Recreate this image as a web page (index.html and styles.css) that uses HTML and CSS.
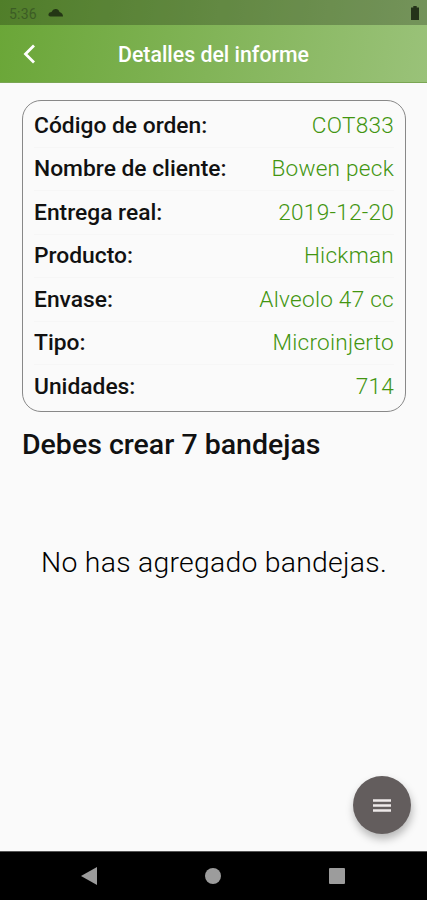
FILE: index.html
```html
<!DOCTYPE html>
<html lang="es">
<head>
  <meta charset="UTF-8">
  <meta name="viewport" content="width=device-width, initial-scale=1.0">
  <title>Detalles del informe</title>
  <link rel="stylesheet" href="styles.css">
</head>
<body>
  <div class="top">
    <div class="status-bar">
      <span class="time">5:36</span>
      <svg class="cloud" width="16" height="9" viewBox="0 0 16 9"><path d="M2.500 8.500Q0 8 .5 6Q1 4 3.500 4Q5 .5 8 1Q10.500 1 11.500 4Q15 5 15 8.500z"/></svg>
      <svg class="battery" width="8" height="14" viewBox="0 0 8 14"><path d="M2.300 0h3.400v1.500H8V14H0V1.500h2.300z"/></svg>
    </div>
    <div class="header">
      <button class="back-btn" aria-label="Volver">
        <svg width="14" height="20" viewBox="0 0 14 20"><path d="M12 1.500L3.500 10l8.500 8.500"/></svg>
      </button>
      <div class="title">Detalles del informe</div>
    </div>
  </div>

  <div class="content">
    <div class="card">
      <div class="row"><span class="label">Código de orden:</span><span class="value">COT833</span></div>
      <div class="row"><span class="label">Nombre de cliente:</span><span class="value">Bowen peck</span></div>
      <div class="row"><span class="label">Entrega real:</span><span class="value">2019-12-20</span></div>
      <div class="row"><span class="label">Producto:</span><span class="value">Hickman</span></div>
      <div class="row"><span class="label">Envase:</span><span class="value">Alveolo 47 cc</span></div>
      <div class="row"><span class="label">Tipo:</span><span class="value">Microinjerto</span></div>
      <div class="row"><span class="label">Unidades:</span><span class="value">714</span></div>
    </div>
    <div class="subtitle">Debes crear 7 bandejas</div>
    <div class="empty">No has agregado bandejas.</div>
    <button class="fab" aria-label="Menú">
      <svg width="18" height="13" viewBox="0 0 18 13"><path d="M0 1.500h18M0 6.500h18M0 11.500h18"/></svg>
    </button>
  </div>

  <!-- Android navigation -->
  <div class="nav-bar">
    <svg width="16" height="18" viewBox="0 0 16 18"><path d="M0 9L16 0v18z"/></svg>
    <svg width="16" height="16" viewBox="0 0 16 16"><circle cx="8" cy="8" r="8"/></svg>
    <svg width="16" height="16" viewBox="0 0 16 16"><rect width="16" height="16" rx="1"/></svg>
  </div>
</body>
</html>
```
FILE: styles.css
```css
* {
  box-sizing: border-box;
}

body {
  margin: 0;
  height: 900px;
  display: flex;
  flex-direction: column;
  overflow: hidden;
  font-family: Roboto, sans-serif;
  background: #fafafa;
  color: #111;
}

button {
  border: none;
  padding: 0;
  cursor: pointer;
}

.top {
  height: 83px;
  background: linear-gradient(100deg, #6aa637 0%, #9ac279 100%);
  border-bottom: 1px solid #7aa653;
  color: white;
}

.status-bar {
  height: 25px;
  display: flex;
  align-items: center;
  padding: 2px 8px 0 9px;
  background: rgba(0, 0, 0, 0.24);
}

.time {
  font-size: 14px;
  letter-spacing: 0.2px;
  color: #3c5c25;
}

.cloud {
  margin: -2px 0 0 11px;
  fill: #243615;
}

.battery {
  margin: -2px 0 0 auto;
  fill: #243219;
}

.header {
  height: 57px;
  display: grid;
  grid-template-columns: 60px 1fr 60px;
  align-items: center;
}

.back-btn {
  display: flex;
  margin-left: 22px;
  background: none;
}

.back-btn path {
  fill: none;
  stroke: white;
  stroke-width: 2.8;
}

.title {
  font-size: 21.3px;
  font-weight: 500;
  text-align: center;
  white-space: nowrap;
  padding-top: 2px;
}

.content {
  flex: 1;
  position: relative;
  padding: 17px 21px 0 22px;
}

.card {
  border: 1px solid #888;
  border-radius: 19px;
  padding: 3px 11px 2px;
}

.row {
  height: 43.5px;
  display: flex;
  align-items: center;
  justify-content: space-between;
  border-bottom: 1px solid #f6f6f6;
  font-size: 22.8px;
}

.row:last-child {
  border-bottom: none;
}

.label {
  font-weight: 500;
}

.value {
  font-size: 22.6px;
  font-weight: 300;
  letter-spacing: 0.25px;
  color: #429510;
}

.subtitle {
  margin-top: 15px;
  font-size: 28.5px;
  font-weight: 500;
  line-height: 36px;
}

.empty {
  margin-top: 82px;
  font-size: 28.4px;
  font-weight: 300;
  letter-spacing: 0.25px;
  line-height: 36px;
  text-align: center;
  white-space: nowrap;
  color: #000;
}

.fab {
  position: absolute;
  right: 16px;
  bottom: 17px;
  width: 58px;
  height: 58px;
  display: flex;
  align-items: center;
  justify-content: center;
  border-radius: 50%;
  background: #635d5d;
  box-shadow: 1px 5px 8px rgba(0, 0, 0, 0.28);
}

.fab path {
  stroke: #eee9e9;
  stroke-width: 2.5;
}

.nav-bar {
  height: 49px;
  display: flex;
  align-items: center;
  justify-content: space-between;
  padding: 0 82px 0 81px;
  background: #000;
  border-top: 1px solid #555;
}

.nav-bar svg {
  fill: #9c9c9c;
}
```
